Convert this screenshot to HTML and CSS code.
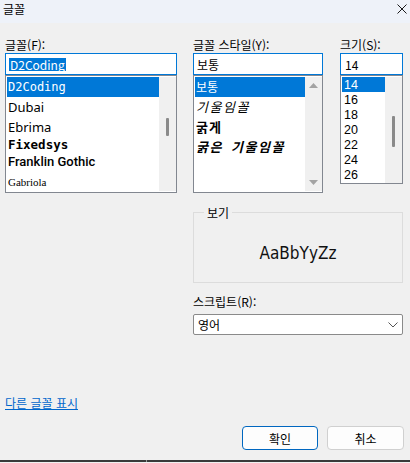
FILE: index.html
```html
<!DOCTYPE html>
<html lang="ko">
<head>
<meta charset="utf-8">
<title>글꼴</title>
<link rel="stylesheet" href="styles.css">
</head>
<body>
<div class="titlebar">
  <span class="title">글꼴</span>
  <svg class="close" width="10" height="10" viewBox="0 0 10 10"><path d="M0.5 0.5L9.5 9.5M9.5 0.5L0.5 9.5" stroke="#1a1a1a" stroke-width="1"/></svg>
</div>
<div class="content">
  <div class="columns">
    <div class="col col-font">
      <div class="label">글꼴(F):</div>
      <div class="input"><span class="hl">D2Coding</span></div>
      <div class="list list-tall">
        <div class="items">
          <div class="item selected f-d2">D2Coding</div>
          <div class="item f-sans">Dubai</div>
          <div class="item f-sans">Ebrima</div>
          <div class="item short f-fixed">Fixedsys</div>
          <div class="item f-franklin">Franklin Gothic</div>
          <div class="item f-gabriola">Gabriola</div>
        </div>
        <div class="scrollbar"><div class="thumb thumb-font"></div></div>
      </div>
    </div>
    <div class="col col-style">
      <div class="label">글꼴 스타일(Y):</div>
      <div class="input"><span class="val">보통</span></div>
      <div class="list list-tall">
        <div class="items">
          <div class="item selected s-reg">보통</div>
          <div class="item s-italic">기울임꼴</div>
          <div class="item s-bold">굵게</div>
          <div class="item s-bolditalic">굵은 기울임꼴</div>
        </div>
        <div class="scrollbar arrows">
          <svg width="9" height="5" viewBox="0 0 9 5"><path d="M0 5L4.5 0L9 5Z" fill="#a3a3a3"/></svg>
          <svg width="9" height="5" viewBox="0 0 9 5"><path d="M0 0L4.5 5L9 0Z" fill="#a3a3a3"/></svg>
        </div>
      </div>
    </div>
    <div class="col col-size">
      <div class="label">크기(S):</div>
      <div class="input"><span class="val">14</span></div>
      <div class="list list-short">
        <div class="items">
          <div class="item num selected">14</div>
          <div class="item num">16</div>
          <div class="item num">18</div>
          <div class="item num">20</div>
          <div class="item num">22</div>
          <div class="item num">24</div>
          <div class="item num">26</div>
        </div>
        <div class="scrollbar"><div class="thumb thumb-size"></div></div>
      </div>
    </div>
  </div>
  <div class="lower">
    <fieldset class="preview">
      <legend>보기</legend>
      <div class="sample">AaBbYyZz</div>
    </fieldset>
    <div class="script-label">스크립트(R):</div>
    <div class="select">
      <span>영어</span>
      <svg width="10" height="6" viewBox="0 0 10 6"><path d="M0.5 0.5L5 5L9.5 0.5" fill="none" stroke="#555" stroke-width="1"/></svg>
    </div>
  </div>
  <div class="linkrow"><a class="link" href="#">다른 글꼴 표시</a></div>
  <div class="buttons">
    <button class="btn btn-default">확인</button>
    <button class="btn">취소</button>
  </div>
</div>
<div class="strip"></div>
</body>
</html>
```
FILE: styles.css
```css
* { box-sizing: border-box; }
html, body { margin: 0; padding: 0; }
body {
  width: 410px;
  height: 463px;
  overflow: hidden;
  background: #f0f0f0;
  font-family: "Noto Sans CJK KR", "Noto Sans", sans-serif;
  font-size: 12px;
  color: #000;
}
.titlebar {
  height: 23px;
  background: #eef2f9;
  display: flex;
  align-items: flex-start;
  justify-content: space-between;
  padding: 1px 3px 0 3px;
}
.title { line-height: 15px; }
.close { margin-top: 3px; }

.content { padding: 14px 6px 0 5px; }
.columns { display: flex; }
.col-font { width: 172px; }
.col-style { width: 130px; margin-left: 16px; }
.col-size { width: 63px; margin-left: 17px; }
.label { height: 16px; line-height: 16px; white-space: nowrap; }

.input {
  height: 22px;
  border: 1px solid #0078d7;
  background: #fff;
  display: flex;
  align-items: center;
  padding-left: 3px;
}
.col-size .input { padding-left: 4px; }
.hl {
  background: #0078d7;
  color: #fff;
  line-height: 13px;
  padding: 0 1px;
}
.val { line-height: 15px; }

.list {
  display: flex;
  background: #fff;
  border: 1px solid #828790;
  padding: 1px 0 1px 1px;
}
.list-tall { height: 118px; }
.list-short { height: 109px; padding-bottom: 0; }
.items { flex: 1; overflow: hidden; }
.item {
  height: 20px;
  line-height: 16px;
  display: flex;
  align-items: center;
  padding-left: 1px;
  white-space: nowrap;
}
.item.short { height: 15px; line-height: 14px; }
.item.selected { background: #0078d7; color: #fff; }
.item.num {
  height: 15px;
  line-height: 14px;
  padding-left: 2px;
  font-family: "Liberation Sans", sans-serif;
  font-size: 12.5px;
}

.f-d2 { font-family: "DejaVu Sans Mono", monospace; font-size: 12px; }
.f-sans { font-family: "Noto Sans", sans-serif; font-size: 13px; }
.f-fixed { font-family: "DejaVu Sans Mono", monospace; font-weight: bold; font-size: 12.5px; }
.f-franklin { font-family: Roboto, sans-serif; font-weight: 500; font-size: 13px; }
.f-gabriola { font-family: "Liberation Serif", serif; font-size: 11px; }

.s-reg { font-size: 12px; }
.s-italic { font-size: 13px; font-style: italic; letter-spacing: 1.5px; }
.s-bold { font-size: 13px; font-weight: bold; letter-spacing: 1px; }
.s-bolditalic { font-size: 13px; font-weight: bold; font-style: italic; letter-spacing: 1.5px; word-spacing: 3px; }

.scrollbar {
  width: 17px;
  background: #f0f0f0;
  display: flex;
  flex-direction: column;
  align-items: center;
}
.scrollbar.arrows {
  justify-content: space-between;
  padding: 6px 0 6px 0;
}
.thumb { width: 3px; background: #8a8a8a; border-radius: 1px; }
.thumb-font { margin-top: 41px; height: 18px; }
.thumb-size { margin-top: 39px; height: 31px; }

.lower { margin-left: 188px; width: 210px; margin-top: 12px; }
.preview {
  margin: 0;
  padding: 0;
  border: 1px solid #dcdcdc;
  min-inline-size: 0;
}
.preview legend {
  margin-left: 10px;
  padding: 0 3px;
  line-height: 15px;
  font-size: 12px;
}
.sample {
  height: 62px;
  padding-top: 23px;
  text-align: center;
  font-family: "DejaVu Sans Condensed", "DejaVu Sans", sans-serif;
  font-size: 17px;
  line-height: 20px;
  color: #111;
}
.script-label { margin-top: 11px; line-height: 15px; }
.select {
  margin-top: 5px;
  height: 21px;
  border: 1px solid #8a8a8a;
  border-radius: 2px;
  background: #fff;
  display: flex;
  align-items: center;
  justify-content: space-between;
  padding: 0 4px 0 4px;
}

.linkrow { margin-top: 60px; line-height: 15px; }
.link { color: #0066cc; text-decoration: underline; }

.buttons {
  display: flex;
  justify-content: flex-end;
  gap: 9px;
  margin-top: 16px;
}
.btn {
  width: 77px;
  height: 24px;
  background: #fdfdfd;
  border: 1px solid #d0d0d0;
  border-radius: 4px;
  font-family: "Noto Sans CJK KR", sans-serif;
  font-size: 12px;
  color: #000;
  padding: 0;
}
.btn-default { width: 76px; border-color: #0067c0; }

.strip {
  margin-top: 10px;
  height: 2px;
  background: linear-gradient(to right, #3a3a3a 0, #3a3a3a 146px, #9a9a9a 146px, #9a9a9a 147px, #3a3a3a 147px);
}
```
